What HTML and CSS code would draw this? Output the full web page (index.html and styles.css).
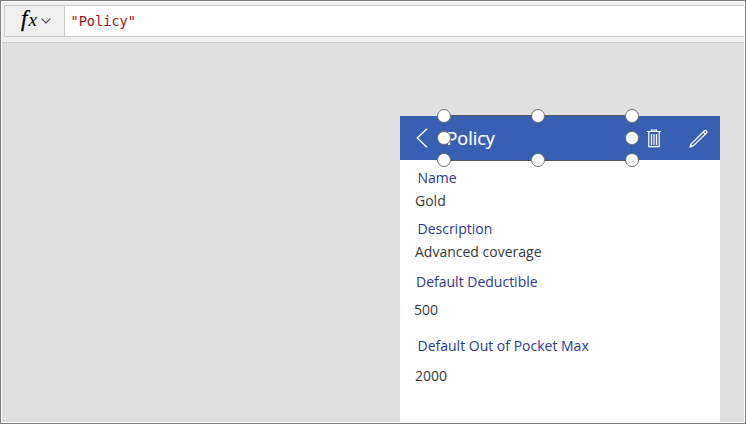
FILE: index.html
```html
<!DOCTYPE html>
<html lang="en">
<head>
<meta charset="utf-8">
<title>Policy</title>
<link rel="stylesheet" href="styles.css">
</head>
<body>
<div class="window">
  <div class="formula-bar">
    <div class="fx-button">
      <span class="fx"><span class="fx-f">f</span><span class="fx-x">x</span></span>
      <svg class="chevron" width="10" height="6" viewBox="0 0 10 6"><path d="M.7.7 5 5 9.3.7"/></svg>
    </div>
    <div class="formula">"Policy"</div>
  </div>
  <main class="canvas">
    <section class="screen">
      <header class="header">
        <svg class="back" width="12" height="20" viewBox="0 0 12 20"><path d="M11 .7 1.2 10 11 19.3"/></svg>
        <div class="title">Policy
          <div class="selection">
            <i class="handle nw"></i><i class="handle n"></i><i class="handle ne"></i>
            <i class="handle w"></i><i class="handle e"></i>
            <i class="handle sw"></i><i class="handle s"></i><i class="handle se"></i>
          </div>
        </div>
        <svg class="trash" width="14" height="19" viewBox="0 0 14 19"><path d="M0 2.5h14M4.5 2V1h5v1M1.8 3v14.6h10.4V3M4.5 5v11M7 5v11M9.5 5v11"/></svg>
        <svg class="pencil" width="19" height="19" viewBox="0 0 19 19"><path d="M1.5 17.5 2.3 14.9 15.2 2Q16.3.9 17.4 2T17.4 4.2L4.4 16.8ZM14.2 3l2.2 2.2"/><path class="tip" d="M.3 18.7 1.2 15 4.2 17.8Z"/></svg>
      </header>
      <dl class="fields">
        <dt class="label-name">Name</dt><dd class="value-name">Gold</dd>
        <dt class="label-description">Description</dt><dd class="value-description">Advanced coverage</dd>
        <dt class="label-deductible">Default Deductible</dt><dd class="value-deductible">500</dd>
        <dt class="label-max">Default Out of Pocket Max</dt><dd class="value-max">2000</dd>
      </dl>
    </section>
  </main>
</div>
</body>
</html>
```
FILE: styles.css
```css
* { box-sizing: border-box; }
body { margin: 0; font-family: "Open Sans", sans-serif; }
svg { display: block; fill: none; stroke: #fff; flex: none; }
.window {
  width: 746px; height: 424px; padding: 1px;
  border: 1px solid #7f7c7f; background: #fff;
  display: flex; flex-direction: column; overflow: hidden;
}
.formula-bar {
  height: 41px; flex: none; padding: 3px 0 5px 2px;
  background: #f0f0f0; border-bottom: 1px solid #ccc; display: flex;
}
.fx-button {
  width: 61px; border: 1px solid #c8c8c8; background: #f0f0f0;
  display: flex; align-items: center; padding-left: 16px;
}
.fx {
  width: 18px; height: 30px; color: #000; font: italic 20px/26px "Liberation Serif", serif;
  white-space: nowrap;
}
.fx-f { font-size: 23px; -webkit-text-stroke: .3px #000; }
.fx-x { font-size: 19px; margin-left: 1px; }
.chevron { margin-left: 2px; stroke: #444; stroke-width: 1.2; }
.formula {
  flex: 1; border: solid #c8c8c8; border-width: 1px 0; background: #fff;
  color: #a31515; font: 13.6px/30px "DejaVu Sans Mono", monospace; padding-left: 5.5px;
}
.canvas { flex: 1; background: #e0e0e0; padding: 73px 0 0 398px; }
.screen { width: 320px; height: 306px; background: #fff; }
.header { height: 44px; background: #3860b2; display: flex; align-items: center; padding-left: 16px; }
.back { stroke-width: 1.3; }
.title {
  position: relative; width: 189px; height: 44px; margin-left: 15px; padding-left: 3.5px;
  color: #fff; font-size: 18px; line-height: 44px; -webkit-text-stroke: .2px #fff;
}
.selection { position: absolute; inset: -1px 0; border: 1px solid #555; }
.handle {
  position: absolute; width: 14px; height: 14px; margin: -7px;
  border: 1px solid #707070; border-radius: 50%; background: #fff;
}
.nw, .n, .ne { top: 0; }
.w, .e { top: 22px; }
.sw, .s, .se { top: 44px; }
.nw, .w, .sw { left: 0; }
.n, .s { left: 94px; }
.ne, .e, .se { left: 188px; }
.trash { margin-left: 15px; stroke-width: 1.2; }
.pencil { margin-left: 28px; stroke-width: 1.2; }
.tip { fill: #fff; stroke: none; }
.fields { margin: 0; padding: 8px 0 0 14px; font-size: 14px; line-height: 20px; white-space: nowrap; }
dt { color: #2c3890; padding-left: 3.5px; }
dd { margin: 0; color: #383838; padding-left: 1px; }
.value-name, .value-description { margin-top: 3px; }
.label-description { margin-top: 8px; }
.label-deductible { margin-top: 10px; padding-left: 2px; }
.value-deductible { margin-top: 8px; padding-left: 0; }
.label-max { margin-top: 16px; }
.value-max { margin-top: 10px; }
```
